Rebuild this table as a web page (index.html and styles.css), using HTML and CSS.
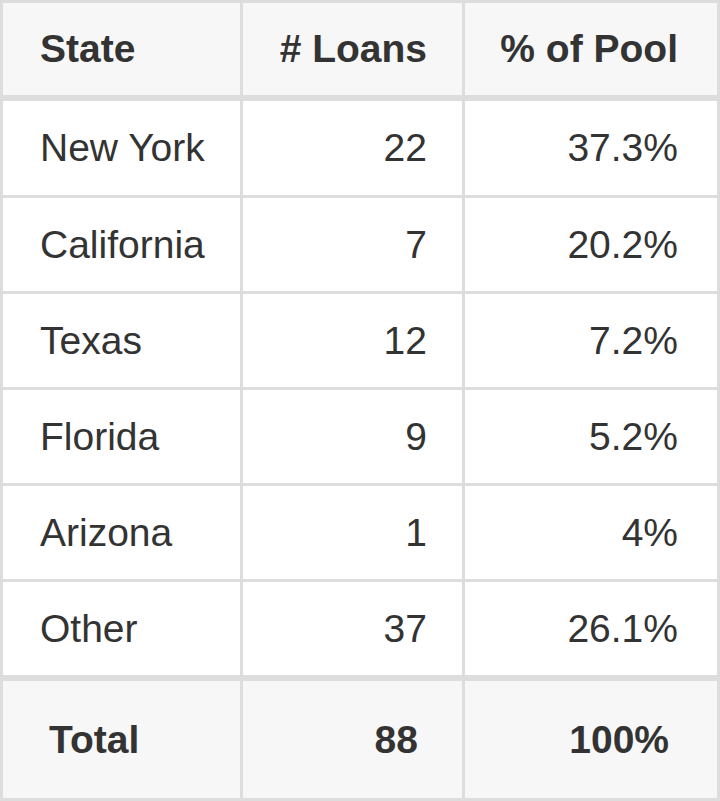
FILE: index.html
```html
<!DOCTYPE html>
<html lang="en">
<head>
<meta charset="utf-8">
<title>Loans by State</title>
<link rel="stylesheet" href="styles.css">
</head>
<body>
<table class="pool">
  <thead>
    <tr>
      <th class="c1">State</th>
      <th class="c2">#&nbsp;Loans</th>
      <th class="c3">%&nbsp;of&nbsp;Pool</th>
    </tr>
  </thead>
  <tbody>
    <tr class="first"><td class="c1">New York</td><td class="c2">22</td><td class="c3">37.3%</td></tr>
    <tr><td class="c1">California</td><td class="c2">7</td><td class="c3">20.2%</td></tr>
    <tr><td class="c1">Texas</td><td class="c2">12</td><td class="c3">7.2%</td></tr>
    <tr><td class="c1">Florida</td><td class="c2">9</td><td class="c3">5.2%</td></tr>
    <tr><td class="c1">Arizona</td><td class="c2">1</td><td class="c3">4%</td></tr>
    <tr><td class="c1">Other</td><td class="c2">37</td><td class="c3">26.1%</td></tr>
  </tbody>
  <tfoot>
    <tr><td class="c1">Total</td><td class="c2">88</td><td class="c3">100%</td></tr>
  </tfoot>
</table>
</body>
</html>
```

FILE: styles.css
```css
html, body {
  margin: 0;
  padding: 0;
  background: #ffffff;
}

.pool {
  width: 720px;
  table-layout: fixed;
  border-collapse: separate;
  border-spacing: 0;
  border-top: 3px solid #dddddd;
  border-left: 3px solid #dddddd;
  font-family: "Liberation Sans", Arial, Helvetica, sans-serif;
  font-size: 39px;
  color: #333333;
}

.pool th,
.pool td {
  box-sizing: border-box;
  padding: 0;
  border-right: 3px solid #dddddd;
  border-bottom: 3px solid #dddddd;
  white-space: nowrap;
  vertical-align: middle;
  line-height: 93px;
}

.pool .c1 { width: 240px; text-align: left; padding-left: 37px; }
.pool .c2 { width: 222px; text-align: right; padding-right: 35px; }
.pool .c3 { width: 255px; text-align: right; padding-right: 39px; }

.pool thead th {
  background: #f7f7f7;
  font-weight: bold;
  line-height: 92px;
  border-bottom-width: 6px;
}

.pool tbody tr.first td {
  line-height: 94px;
}

.pool tfoot td {
  background: #f7f7f7;
  font-weight: bold;
  line-height: 117px;
  border-top: 3px solid #dddddd;
}

.pool tfoot .c1 { padding-left: 46px; }
.pool tfoot .c2 { padding-right: 44px; }
.pool tfoot .c3 { padding-right: 48px; }
```
